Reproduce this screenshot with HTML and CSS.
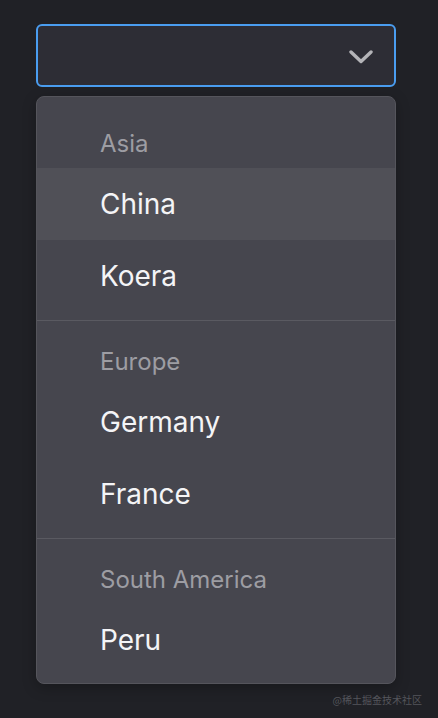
FILE: index.html
```html
<!DOCTYPE html>
<html lang="en">
<head>
    <meta charset="UTF-8">
    <meta name="viewport" content="width=device-width, initial-scale=1.0">
    <title>Select</title>
    <link rel="stylesheet" href="styles.css">
</head>
<body>
    <div class="wrapper">
        <!-- Trigger -->
        <div class="select">
            <span class="select-value"></span>
            <svg class="arrow" width="24" height="14" viewBox="0 0 24 14">
                <polyline points="2,2 12,11.5 22,2" fill="none" stroke="#b4b4b8" stroke-width="3.4" stroke-linecap="round" stroke-linejoin="round"/>
            </svg>
        </div>

        <!-- Menu -->
        <div class="menu">
            <div class="group">
                <div class="group-label">Asia</div>
                <div class="option hover">China</div>
                <div class="option">Koera</div>
            </div>
            <div class="divider"></div>
            <div class="group">
                <div class="group-label">Europe</div>
                <div class="option">Germany</div>
                <div class="option">France</div>
            </div>
            <div class="divider"></div>
            <div class="group">
                <div class="group-label">South America</div>
                <div class="option">Peru</div>
            </div>
        </div>

        <div class="watermark">@稀土掘金技术社区</div>
    </div>
</body>
</html>
```

FILE: styles.css
```css
body {
    margin: 0;
    padding: 0;
    background: #202126;
    font-family: Inter, "Noto Sans", sans-serif;
    color: #fff;
}

.wrapper {
    padding: 24px 42px 0 36px;
}

.select {
    box-sizing: border-box;
    height: 63px;
    border: 2px solid #4a9df0;
    border-radius: 6px;
    background: #2d2d35;
    display: flex;
    align-items: center;
    justify-content: space-between;
    padding: 0 21px 0 20px;
}

.select-value {
    flex: 1;
}

.arrow {
    display: block;
    margin-top: 2px;
}

.menu {
    margin-top: 9px;
    border: 1px solid #55555c;
    border-radius: 8px;
    background: #46464e;
    padding: 7px 0;
    box-shadow: 0 4px 14px rgba(0, 0, 0, 0.25);
    overflow: hidden;
}

.group-label {
    box-sizing: border-box;
    height: 64px;
    display: flex;
    align-items: flex-end;
    padding: 0 0 12px 63px;
    font-size: 24px;
    line-height: 24px;
    color: #9d9da3;
}

.option {
    height: 72px;
    display: flex;
    align-items: center;
    padding-left: 63px;
    font-size: 28px;
    color: #f4f4f6;
}

.option.hover {
    background: #505057;
}

.divider {
    height: 1px;
    background: #5a5a61;
    margin: 8px 0 1px;
}

.watermark {
    text-align: right;
    margin: 8px -26px 0 0;
    font-family: "Noto Sans CJK SC", sans-serif;
    font-size: 10px;
    color: #54555b;
}
```
